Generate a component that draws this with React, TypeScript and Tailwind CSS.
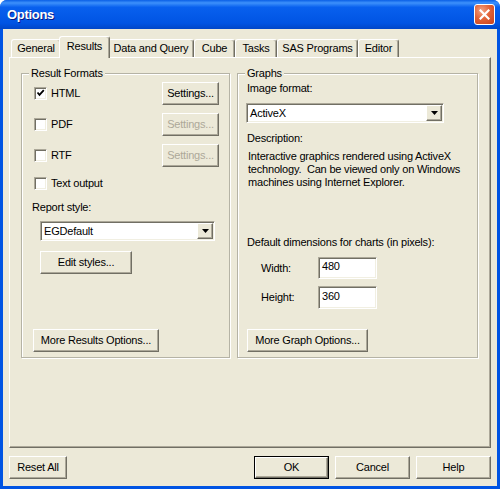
import React from "react";

const raised =
  "border border-t-white border-l-white border-r-[#716f64] border-b-[#716f64] shadow-[inset_-1px_-1px_0_#aca899]";
const sunken =
  "border border-t-[#aca899] border-l-[#aca899] border-r-white border-b-white shadow-[inset_1px_1px_0_#716f64,inset_-1px_-1px_0_#f1efe2]";

type BtnProps = {
  children: React.ReactNode;
  className?: string;
  disabled?: boolean;
};

function Btn({ children, className = "", disabled }: BtnProps) {
  return (
    <div
      className={`flex items-center justify-center bg-[#ece9d8] ${raised} ${
        disabled ? "text-[#aca899]" : "text-black"
      } ${className}`}
    >
      {children}
    </div>
  );
}

function CheckBox({ checked, label }: { checked?: boolean; label: string }) {
  return (
    <div className="flex items-center">
      <div className={`w-[13px] h-[13px] bg-white flex items-center justify-center ${sunken}`}>
        {checked && (
          <svg width="9" height="9" viewBox="0 0 9 9">
            <path d="M1.5 3.5 L3.5 5.8 L7.8 1.2" stroke="black" strokeWidth="1.8" fill="none" />
          </svg>
        )}
      </div>
      <span className="ml-[4px]">{label}</span>
    </div>
  );
}

function Combo({ value, className = "" }: { value: string; className?: string }) {
  return (
    <div className={`h-[20px] bg-white flex items-center ${sunken} ${className}`}>
      <span className="flex-1 pl-[3px]">{value}</span>
      <div className={`w-[16px] h-[16px] mr-[1px] flex items-center justify-center bg-[#ece9d8] ${raised}`}>
        <svg width="7" height="4" viewBox="0 0 7 4">
          <path d="M0 0 H7 L3.5 4 Z" fill="black" />
        </svg>
      </div>
    </div>
  );
}

function Group({
  title,
  className = "",
  children,
}: {
  title: string;
  className?: string;
  children: React.ReactNode;
}) {
  return (
    <div
      className={`h-[285px] flex flex-col border border-[#b5b3a5] shadow-[1px_1px_0_white,inset_1px_1px_0_white] ${className}`}
    >
      <span className="-mt-[7px] ml-[7px] px-[2px] w-fit bg-[#ece9d8] leading-[13px]">{title}</span>
      {children}
    </div>
  );
}

const tabs = [
  { name: "General", w: "w-[50px]" },
  { name: "Results", w: "w-[51px]", selected: true },
  { name: "Data and Query", w: "w-[86px]" },
  { name: "Cube", w: "w-[41px]" },
  { name: "Tasks", w: "w-[42px]" },
  { name: "SAS Programs", w: "w-[81px]" },
  { name: "Editor", w: "w-[41px]" },
];

export default function App() {
  return (
    <div className="w-[500px] h-[489px] bg-[#0054e3] rounded-t-[7px] flex flex-col font-['Liberation_Sans',Arial,sans-serif] text-[11px] leading-[13px] tracking-[-0.2px] text-black overflow-hidden">
      {/* title bar */}
      <div className="h-[29px] shrink-0 flex items-center pl-[7px] pr-[5px] bg-[linear-gradient(to_bottom,#0a5fe6_0%,#3d91fb_10%,#0860ee_25%,#0054e3_80%,#0046c8_100%)]">
        <span className="flex-1 text-white font-bold text-[13px] tracking-[-0.3px] pb-[1px] [text-shadow:1px_1px_0_#0a1883]">
          Options
        </span>
        <div className="w-[21px] h-[21px] rounded-[3px] border border-white bg-[radial-gradient(circle_at_35%_30%,#f3a384_0%,#e26338_45%,#c7401b_100%)] flex items-center justify-center">
          <svg width="11" height="11" viewBox="0 0 11 11">
            <path d="M1.5 1.5 L9.5 9.5 M9.5 1.5 L1.5 9.5" stroke="white" strokeWidth="2.2" strokeLinecap="square" />
          </svg>
        </div>
      </div>

      {/* body */}
      <div className="flex-1 mx-[3px] mb-[3px] bg-[#ece9d8] flex flex-col">
        <div className="mx-[6px] mt-[7px] flex flex-col">
          {/* tabs */}
          <div className="h-[21px] flex items-end pl-[2px]">
            {tabs.map((t) =>
              t.selected ? (
                <div
                  key={t.name}
                  className={`${t.w} h-[22px] -mb-px -mx-[2px] relative z-10 bg-[#ece9d8] border-t border-l border-r border-t-white border-l-white border-r-[#716f64] rounded-t-[3px] shadow-[inset_-1px_0_0_#aca899] flex items-center justify-center pb-[2px]`}
                >
                  {t.name}
                </div>
              ) : (
                <div
                  key={t.name}
                  className={`${t.w} h-[18px] bg-[#ece9d8] border-t border-l border-r border-t-white border-l-white border-r-[#716f64] rounded-t-[3px] shadow-[inset_-1px_0_0_#aca899] flex items-center justify-center`}
                >
                  {t.name}
                </div>
              )
            )}
          </div>

          {/* panel */}
          <div
            className={`h-[391px] border border-t-white border-l-white border-r-[#716f64] border-b-[#716f64] shadow-[inset_-1px_-1px_0_#aca899] flex gap-[7px] pt-[15px] pl-[11px]`}
          >
            <Group title="Result Formats" className="w-[209px]">
              <div className="mt-[2px] pl-[12px] pr-[10px] flex flex-col">
                <div className="h-[23px] flex items-center justify-between">
                  <CheckBox checked label="HTML" />
                  <Btn className="w-[57px] h-[23px]">Settings...</Btn>
                </div>
                <div className="h-[23px] mt-[8px] flex items-center justify-between">
                  <CheckBox label="PDF" />
                  <Btn disabled className="w-[57px] h-[23px]">Settings...</Btn>
                </div>
                <div className="h-[23px] mt-[8px] flex items-center justify-between">
                  <CheckBox label="RTF" />
                  <Btn disabled className="w-[57px] h-[23px]">Settings...</Btn>
                </div>
                <div className="h-[13px] mt-[10px] flex items-center">
                  <CheckBox label="Text output" />
                </div>
              </div>
              <div className="mt-[11px] pl-[10px]">Report style:</div>
              <Combo value="EGDefault" className="mt-[7px] ml-[18px] w-[175px]" />
              <Btn className="mt-[10px] ml-[18px] w-[92px] h-[23px]">Edit styles...</Btn>
              <Btn className="mt-auto mb-[5px] ml-[11px] w-[126px] h-[23px]">More Results Options...</Btn>
            </Group>

            <Group title="Graphs" className="w-[241px]">
              <div className="mt-[2px] pl-[9px]">Image format:</div>
              <Combo value="ActiveX" className="mt-[8px] ml-[8px] w-[198px]" />
              <div className="mt-[9px] pl-[9px]">Description:</div>
              <div className="mt-[5px] pl-[10px] whitespace-pre">
                {"Interactive graphics rendered using ActiveX\ntechnology.  Can be viewed only on Windows\nmachines using Internet Explorer."}
              </div>
              <div className="mt-[47px] pl-[9px]">Default dimensions for charts (in pixels):</div>
              <div className="mt-[8px] pl-[23px] flex items-center">
                <span className="w-[57px]">Width:</span>
                <div className={`w-[59px] h-[22px] bg-white pl-[3px] pb-[3px] flex items-center ${sunken}`}>480</div>
              </div>
              <div className="mt-[7px] pl-[23px] flex items-center">
                <span className="w-[57px]">Height:</span>
                <div className={`w-[59px] h-[23px] bg-white pl-[3px] pb-[3px] flex items-center ${sunken}`}>360</div>
              </div>
              <Btn className="mt-auto mb-[5px] ml-[9px] w-[121px] h-[23px]">More Graph Options...</Btn>
            </Group>
          </div>
        </div>

        {/* bottom buttons */}
        <div className="mt-[8px] mx-[6px] flex items-center">
          <Btn className="w-[58px] h-[23px]">Reset All</Btn>
          <div className="ml-auto w-[75px] h-[23px] border border-black flex">
            <Btn className="flex-1">OK</Btn>
          </div>
          <Btn className="ml-[6px] w-[75px] h-[23px]">Cancel</Btn>
          <Btn className="ml-[6px] w-[75px] h-[23px]">Help</Btn>
        </div>
      </div>
    </div>
  );
}
